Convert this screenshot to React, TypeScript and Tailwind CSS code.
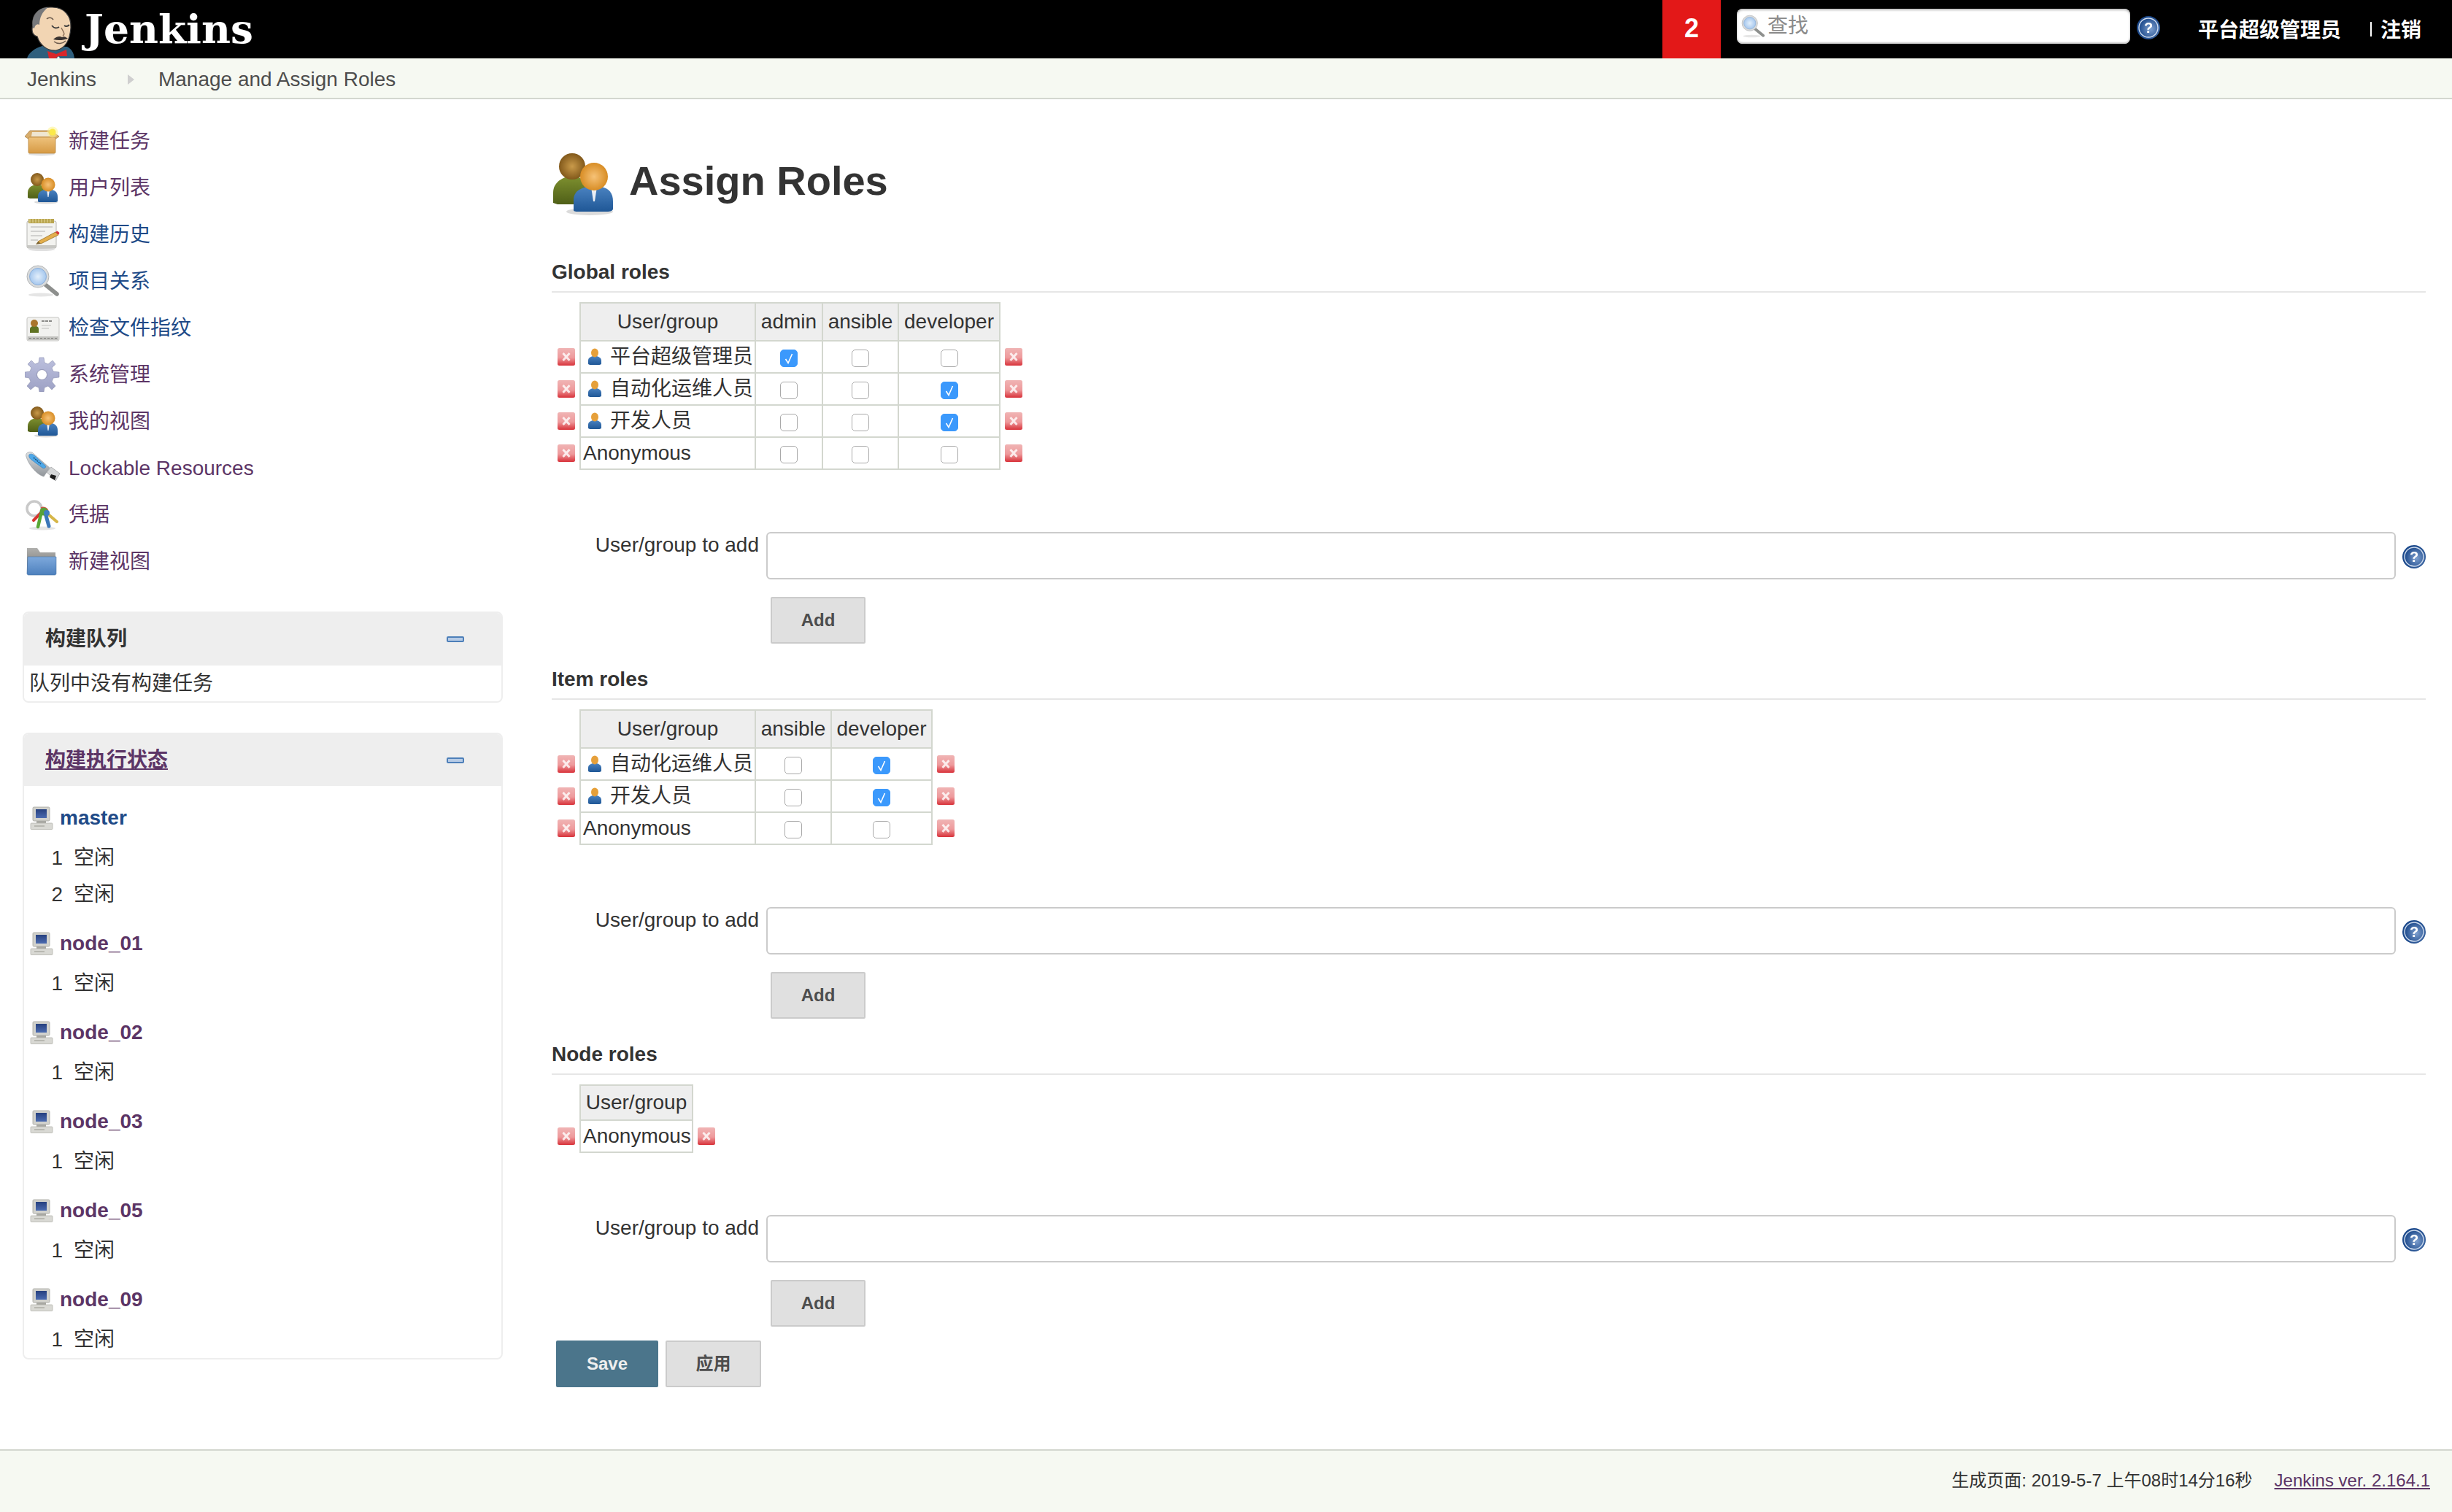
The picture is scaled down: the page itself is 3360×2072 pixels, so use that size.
const FONT = "[font-family:'Liberation_Sans','Noto_Sans_CJK_SC',sans-serif]";
const SOFT = "shrink-0 blur-[0.5px]";

const JenkinsMascot = () => (
  <svg width="80" height="80" viewBox="0 0 80 80" className={SOFT}>
    <path d="M7 80 C9 72 18 66 28 63 L62 64 C68 67 71 72 72 80 Z" fill="#2f5f7d" />
    <path d="M15 34 C13 17 27 9 42 10 C58 10 68 22 67 38 C66 54 60 66 47 69 C33 70 24 60 21 50 C16 49 12 44 15 34 Z" fill="#f2d5b3" stroke="#3a3a3a" strokeWidth="1.2" />
    <path d="M15 38 C12 20 24 10 36 10 C28 16 24 24 24 34 C21 32 18 34 17 39 Z" fill="#77787a" />
    <path d="M34 26 C37 23 41 24 43 27" fill="none" stroke="#6b5a4c" strokeWidth="1.6" />
    <path d="M41 35 C44 39 48 39 51 37 M58 35 C61 37 63 36 65 34" fill="none" stroke="#3a3a3a" strokeWidth="1.8" />
    <path d="M54 38 C57 44 60 47 56 49" fill="none" stroke="#8b6f58" strokeWidth="1.4" />
    <path d="M43 54 C47 50 52 49 55 51 C58 49 61 51 63 53 C57 55 50 56 43 54 Z" fill="#3a3330" />
    <path d="M44 57 C49 61 56 60 60 56" fill="none" stroke="#6b5a4c" strokeWidth="1.4" />
    <path d="M35 70 L47 74 L61 68 L62 77 L50 77 L46 80 L37 80 Z" fill="#d9262b" />
    <circle cx="50" cy="79" r="1.6" fill="#eee" />
  </svg>
);

const Grad = ({ id, top, bottom }: { id: string; top: string; bottom: string }) => (
  <linearGradient id={id} x1="0" y1="0" x2="0" y2="1">
    <stop offset="0" stopColor={top} />
    <stop offset="1" stopColor={bottom} />
  </linearGradient>
);

const PeopleIcon = ({ size = 48 }: { size?: number }) => (
  <svg width={size} height={size} viewBox="0 0 48 48" className={SOFT}>
    <defs>
      <Grad id="ppl-olive" top="#7d8f2f" bottom="#4f5f17" />
      <Grad id="ppl-blue" top="#4a82c0" bottom="#1f5796" />
      <radialGradient id="ppl-back">
        <stop offset="0" stopColor="#c99a4a" />
        <stop offset="1" stopColor="#82591b" />
      </radialGradient>
      <radialGradient id="ppl-front">
        <stop offset="0" stopColor="#f6c277" />
        <stop offset="1" stopColor="#d88d25" />
      </radialGradient>
    </defs>
    <ellipse cx="29" cy="44" rx="16" ry="2.5" fill="#000" opacity=".14" />
    <path d="M4 38 V31 C4 24 10 21 14 20 H20 C25 21 28 26 28 36 L20 39 H7 Z" fill="url(#ppl-olive)" />
    <circle cx="17" cy="13" r="9" fill="url(#ppl-back)" />
    <path d="M18 43 V36 C18 30 23 28 27 27 H37 C42 28 45 31 45 37 V42 C45 44 42 44 40 44 H22 C20 44 18 44 18 43 Z" fill="url(#ppl-blue)" />
    <path d="M30 27 H34 L32.5 37 H31.5 Z" fill="#e9eef5" />
    <circle cx="32" cy="20" r="9.5" fill="url(#ppl-front)" />
  </svg>
);

const PackageIcon = () => (
  <svg width="48" height="48" viewBox="0 0 48 48" className={SOFT}>
    <defs>
      <Grad id="pkg-body" top="#eec27c" bottom="#d69a44" />
    </defs>
    <ellipse cx="23" cy="42" rx="18" ry="2.5" fill="#000" opacity=".12" />
    <path d="M0 18 L7 10 H36 L47 18 L41 22 H6 Z" fill="#d8ad6c" stroke="#a9824a" strokeWidth=".8" />
    <path d="M10 12 H32 L35 18 H9 Z" fill="#efe6d2" />
    <rect x="5" y="19" width="37" height="22" rx="1.5" fill="url(#pkg-body)" stroke="#b8863e" strokeWidth=".8" />
    <circle cx="38" cy="12" r="7.5" fill="#fdf28a" opacity=".55" />
    <circle cx="38" cy="12" r="4.5" fill="#fbe94a" />
  </svg>
);

const NotepadIcon = () => (
  <svg width="48" height="48" viewBox="0 0 48 48" className={SOFT}>
    <ellipse cx="23" cy="45" rx="18" ry="2" fill="#000" opacity=".12" />
    <rect x="3" y="6" width="40" height="37" rx="2" fill="#f3f3f0" stroke="#b6b6b2" strokeWidth="1" />
    <rect x="3" y="39" width="40" height="4" fill="#c8c8c4" />
    <rect x="5" y="3" width="35" height="6" fill="#b9a54f" />
    <path d="M7 3 V8 M11 3 V8 M15 3 V8 M19 3 V8 M23 3 V8 M27 3 V8 M31 3 V8 M35 3 V8" stroke="#e7dca0" strokeWidth="1" />
    <path d="M8 14 H38 M8 20 H28 M8 26 H24 M8 32 H18" stroke="#c6c6c3" strokeWidth="1.6" />
    <path d="M18 34 L42 21 L46 25 L22 37 Z" fill="#e3ae4c" stroke="#9c7426" strokeWidth=".8" />
    <path d="M18 34 L22 37 L15 38 Z" fill="#7c6330" />
    <path d="M42 21 L46 25 L47.5 22 L44.5 19.5 Z" fill="#d7353a" />
  </svg>
);

const SearchIcon = ({ size = 48 }: { size?: number }) => (
  <svg width={size} height={size} viewBox="0 0 48 48" className={SOFT}>
    <defs>
      <radialGradient id="srch-glass">
        <stop offset="0" stopColor="#e3effb" />
        <stop offset="1" stopColor="#a5c7ee" />
      </radialGradient>
    </defs>
    <ellipse cx="22" cy="43" rx="17" ry="2.5" fill="#000" opacity=".1" />
    <path d="M28 29 L44 42" stroke="#8d8f8d" strokeWidth="5.5" strokeLinecap="round" />
    <circle cx="18" cy="18" r="15" fill="#d9dbdc" stroke="#b5b7b8" strokeWidth="1" />
    <circle cx="18" cy="18" r="11.5" fill="url(#srch-glass)" stroke="#8fb0d8" strokeWidth="1" />
  </svg>
);

const CardIcon = () => (
  <svg width="48" height="48" viewBox="0 0 48 48" className={SOFT}>
    <rect x="3" y="10" width="44" height="32" rx="2" fill="#f1f1ef" stroke="#c5c5c2" strokeWidth="1" />
    <rect x="4" y="36" width="42" height="5" fill="#c2c2bf" />
    <path d="M6 38.5 H44" stroke="#7c7c7a" strokeWidth="1" strokeDasharray="3 2" />
    <path d="M7 31 V26 C7 23 10 22 11 22 H15 C17 22 19 23 19 26 V31 Z" fill="#5f7222" />
    <circle cx="13" cy="18" r="5" fill="#a9742c" />
    <path d="M23 15 H38" stroke="#8a8a88" strokeWidth="2" strokeDasharray="4 1" />
    <path d="M23 21 H36 M23 25 H33" stroke="#d0d0ce" strokeWidth="1.5" />
  </svg>
);

const GearIcon = () => (
  <svg width="48" height="48" viewBox="0 0 48 48" className={SOFT}>
    <defs>
      <Grad id="gear-fill" top="#bcc0de" bottom="#9da1c4" />
    </defs>
    <path
      d="M20 1 H26 L27 8 L32 10 L38 5 L42 10 L37 15 L39 20 L47 21 V28 L39 29 L37 34 L42 40 L37 45 L32 40 L27 42 L26 48 H20 L19 42 L14 40 L8 45 L3 40 L8 34 L6 29 L0 28 V21 L7 20 L9 15 L4 10 L9 5 L14 10 L19 8 Z"
      fill="url(#gear-fill)"
      stroke="#8a8eaf"
      strokeWidth=".6"
    />
    <circle cx="23.5" cy="24.5" r="7" fill="#fff" stroke="#7f83a5" strokeWidth=".8" />
  </svg>
);

const UsbIcon = () => (
  <svg width="48" height="48" viewBox="0 0 48 48" className={SOFT}>
    <defs>
      <Grad id="usb-body" top="#dfe2e4" bottom="#8f9499" />
    </defs>
    <path d="M2 9 C0 4 6 1 10 3 L34 24 L26 36 C18 34 6 22 2 9 Z" fill="url(#usb-body)" stroke="#9b9fa3" strokeWidth=".7" />
    <path d="M6 6 C9 4 12 6 14 8 L28 21 C30 23 27 26 24 24 L9 13 C6 11 5 8 6 6 Z" fill="#4ea8e8" stroke="#2d78b8" strokeWidth=".6" />
    <path d="M12 10 L22 19" stroke="#164f80" strokeWidth="1.5" strokeDasharray="2 1" />
    <path d="M30 30 L36 23 L48 32 L42 42 Z" fill="#d5d7d8" stroke="#8a8c8e" strokeWidth=".6" />
    <path d="M36 33 L43 35 L41 41 L34 37 Z" fill="#1c1c1c" />
  </svg>
);

const KeysIcon = () => (
  <svg width="48" height="48" viewBox="0 0 48 48" className={SOFT}>
    <ellipse cx="24" cy="43" rx="18" ry="2.5" fill="#000" opacity=".1" />
    <circle cx="13" cy="16" r="10" fill="none" stroke="#c9c9c9" strokeWidth="3.5" />
    <path d="M30 22 L44 34" stroke="#d6b648" strokeWidth="4" strokeLinecap="round" />
    <path d="M22 14 C28 12 34 16 32 22 L24 24 Z" fill="#d84b3f" />
    <path d="M24 20 L12 32" stroke="#d8342f" strokeWidth="4" strokeLinecap="round" />
    <path d="M22 24 L18 41" stroke="#5aa834" strokeWidth="4.5" strokeLinecap="round" />
    <path d="M28 22 L33 40" stroke="#3a76b8" strokeWidth="5" strokeLinecap="round" />
    <circle cx="26" cy="20" r="5.5" fill="#58a13a" />
    <circle cx="30" cy="22" r="4" fill="#3f7dc0" />
  </svg>
);

const FolderIcon = () => (
  <svg width="48" height="48" viewBox="0 0 48 48" className={SOFT}>
    <defs>
      <Grad id="fld-tab" top="#b0b0ae" bottom="#6e6e6c" />
      <Grad id="fld-front" top="#7ea9dc" bottom="#4d80bd" />
    </defs>
    <path d="M3 6 H17 L21 12 H42 V40 H3 Z" fill="url(#fld-tab)" />
    <path d="M4 18 H43 V41 C43 42 42 43 41 43 H5 C4 43 3 42 3 41 Z" fill="url(#fld-front)" stroke="#4a76aa" strokeWidth=".6" />
  </svg>
);

const ComputerIcon = () => (
  <svg width="32" height="32" viewBox="0 0 32 32" className={SOFT}>
    <defs>
      <Grad id="cmp-screen" top="#26407f" bottom="#4b6bb0" />
    </defs>
    <rect x="4" y="1" width="23" height="19" rx="1.5" fill="#d2d2cd" stroke="#a3a39d" strokeWidth=".8" />
    <rect x="8" y="4" width="15" height="12" fill="url(#cmp-screen)" />
    <rect x="9" y="20" width="13" height="3" fill="#a8a8a3" />
    <rect x="1" y="23" width="30" height="8.5" rx="1" fill="#d9d9d4" stroke="#b5b5af" strokeWidth=".8" />
    <path d="M6 27 H20" stroke="#a9a9a3" strokeWidth="1.4" />
  </svg>
);

const HelpIcon = () => (
  <svg width="32" height="32" viewBox="0 0 32 32" className={SOFT}>
    <defs>
      <radialGradient id="hlp-fill" cx=".6" cy=".55">
        <stop offset="0" stopColor="#7fa0cf" />
        <stop offset="1" stopColor="#1d4a8c" />
      </radialGradient>
    </defs>
    <circle cx="16" cy="16" r="16" fill="url(#hlp-fill)" />
    <circle cx="16" cy="16" r="13" fill="none" stroke="#cfdcee" strokeWidth="1.4" />
    <text x="16" y="23" textAnchor="middle" fontSize="20" fontWeight="700" fontFamily="Liberation Sans" fill="#fff">
      ?
    </text>
  </svg>
);

const RemoveIcon = () => (
  <svg width="24" height="24" viewBox="0 0 24 24" className="block blur-[0.5px]">
    <defs>
      <linearGradient id="rm-fill" x1="0" y1="0" x2="0" y2="1">
        <stop offset="0" stopColor="#f0b4b4" />
        <stop offset=".55" stopColor="#ee9a9c" />
        <stop offset="1" stopColor="#d8323a" />
      </linearGradient>
    </defs>
    <rect x="0" y="0" width="24" height="24" rx="2.5" fill="url(#rm-fill)" />
    <path d="M7.5 7 L16.5 17 M16.5 7 L7.5 17" stroke="#fff" strokeOpacity=".8" strokeWidth="3" />
  </svg>
);

const PersonIcon = () => (
  <svg width="20" height="24" viewBox="0 0 20 24" className={SOFT}>
    <defs>
      <Grad id="usr-body" top="#4a82c0" bottom="#1f5796" />
    </defs>
    <path d="M1 21 V17 C1 13 5 12 7 11 H13 C15 12 19 13 19 17 V21 C19 23 16 23 14 23 H6 C4 23 1 23 1 21 Z" fill="url(#usr-body)" />
    <ellipse cx="10" cy="6.5" rx="5" ry="6" fill="#e6a03a" />
  </svg>
);

const CollapseIcon = () => (
  <span className="block h-2 w-6 shrink-0 rounded-[2px] border-2 border-[#4d7fb9] bg-[#b6cbe6]" />
);

const Check = ({ checked }: { checked?: boolean }) => (
  <span className="relative inline-block h-6 w-6 align-middle">
    <input
      type="checkbox"
      defaultChecked={checked}
      className="block h-6 w-6 appearance-none rounded-[5px] border border-[#a9a9a9] bg-white checked:border-[#3b99fc] checked:bg-[#3b99fc]"
    />
    {checked && (
      <svg viewBox="0 0 24 24" className="pointer-events-none absolute inset-0 h-6 w-6">
        <path d="M7.5 13 L11 18.5 L16.5 6" fill="none" stroke="#fff" strokeWidth="1.6" />
      </svg>
    )}
  </span>
);

type Row = { name: string; person?: boolean; checks: boolean[] };

const CELL = "border-2 border-[#d3d7cf]";

const RolesTable = ({ roles, rows, widths, headHeight }: { roles: string[]; rows: Row[]; widths: number[]; headHeight: number }) => (
  <table className="border-collapse text-[28px] leading-[34px] text-[#333]">
    <thead>
      <tr style={{ height: headHeight }}>
        <th className="w-[39px] min-w-[39px] p-0" />
        <th style={{ width: widths[0], minWidth: widths[0] }} className={`${CELL} bg-[#eee] p-0 text-center font-normal`}>
          User/group
        </th>
        {roles.map((role, i) => (
          <th key={role} style={{ width: widths[i + 1], minWidth: widths[i + 1] }} className={`${CELL} bg-[#eee] p-0 text-center font-normal`}>
            {role}
          </th>
        ))}
        <th className="p-0" />
      </tr>
    </thead>
    <tbody>
      {rows.map((row) => (
        <tr key={row.name}>
          <td className="p-0 pl-[8px]">
            <RemoveIcon />
          </td>
          <td className={`${CELL} h-[44px] p-0 pl-[3px]`}>
            {row.person ? (
              <span className="flex items-center whitespace-nowrap pl-[6px]">
                <PersonIcon />
                <span className="ml-[11px]">{row.name}</span>
              </span>
            ) : (
              row.name
            )}
          </td>
          {row.checks.map((checked, i) => (
            <td key={i} className={`${CELL} p-0 text-center`}>
              <Check checked={checked} />
            </td>
          ))}
          <td className="p-0 pl-[6px]">
            <RemoveIcon />
          </td>
        </tr>
      ))}
    </tbody>
  </table>
);

const GreyButton = ({ label, className }: { label: string; className: string }) => (
  <button type="button" className={`h-16 rounded-[2px] border-2 border-[#cbcbcb] bg-[#e0e0e0] text-[24px] font-bold text-[#4d4d4d] ${className}`}>
    {label}
  </button>
);

const RoleSection = ({
  title,
  roles,
  rows,
  widths,
  headHeight = 52,
  className,
}: {
  title: string;
  roles: string[];
  rows: Row[];
  widths: number[];
  headHeight?: number;
  className: string;
}) => (
  <section className={className}>
    <h2 className="border-b-2 border-[#e6e6e6] pb-[6px] pt-[2px] text-[28px] font-bold leading-[40px] text-[#333]">{title}</h2>
    <div className="mt-[13px]">
      <RolesTable roles={roles} rows={rows} widths={widths} headHeight={headHeight} />
    </div>
    <div className="mt-[85px] flex">
      <label className="w-[284px] text-right text-[28px] leading-[36px] text-[#333]">User/group to add</label>
      <input type="text" className="ml-[10px] h-[65px] flex-1 rounded-[6px] border-2 border-[#cbcbcb] bg-white" />
      <span className="ml-[9px] self-center pt-[2px]">
        <HelpIcon />
      </span>
    </div>
    <GreyButton label="Add" className="ml-[300px] mt-[24px] block w-[130px]" />
  </section>
);

const navItems = [
  { label: "新建任务", icon: <PackageIcon />, color: "text-[#5c3566]" },
  { label: "用户列表", icon: <PeopleIcon />, color: "text-[#5c3566]" },
  { label: "构建历史", icon: <NotepadIcon />, color: "text-[#204a87]" },
  { label: "项目关系", icon: <SearchIcon />, color: "text-[#204a87]" },
  { label: "检查文件指纹", icon: <CardIcon />, color: "text-[#204a87]" },
  { label: "系统管理", icon: <GearIcon />, color: "text-[#5c3566]" },
  { label: "我的视图", icon: <PeopleIcon />, color: "text-[#5c3566]" },
  { label: "Lockable Resources", icon: <UsbIcon />, color: "text-[#5c3566]" },
  { label: "凭据", icon: <KeysIcon />, color: "text-[#5c3566]" },
  { label: "新建视图", icon: <FolderIcon />, color: "text-[#5c3566]" },
];

const nodes = [
  { name: "master", idle: [1, 2], color: "text-[#204a87]" },
  { name: "node_01", idle: [1], color: "text-[#5c3566]" },
  { name: "node_02", idle: [1], color: "text-[#5c3566]" },
  { name: "node_03", idle: [1], color: "text-[#5c3566]" },
  { name: "node_05", idle: [1], color: "text-[#5c3566]" },
  { name: "node_09", idle: [1], color: "text-[#5c3566]" },
];

const Sidebar = () => (
  <aside className="w-[756px] shrink-0 pl-[31px] pt-[26px]">
    <nav>
      {navItems.map((item) => (
        <a key={item.label} className={`flex h-16 items-center pl-[3px] text-[28px] ${item.color}`}>
          <span className="mb-[3px] flex">{item.icon}</span>
          <span className="ml-[12px]">{item.label}</span>
        </a>
      ))}
    </nav>
    <div className="mt-[36px] w-[658px] overflow-hidden rounded-[8px] border-2 border-[#eee]">
      <div className="flex h-[72px] items-center justify-between bg-[#eee] pl-[29px] pr-[51px]">
        <span className="text-[28px] font-bold text-[#333]">构建队列</span>
        <CollapseIcon />
      </div>
      <div className="flex h-[49px] items-center pl-[7px] text-[28px] text-[#333]">队列中没有构建任务</div>
    </div>
    <div className="mt-[41px] w-[658px] overflow-hidden rounded-[8px] border-2 border-[#eee]">
      <div className="flex h-[71px] items-center justify-between bg-[#eee] pl-[29px] pr-[51px]">
        <a className="text-[28px] font-bold text-[#5c3566] underline">构建执行状态</a>
        <CollapseIcon />
      </div>
      <div className="pt-[17px]">
        {nodes.map((node) => (
          <div key={node.name} className="mb-[15px] last:mb-0">
            <div className="flex h-[54px] items-center pl-[8px]">
              <ComputerIcon />
              <a className={`ml-[9px] text-[28px] font-bold ${node.color}`}>{node.name}</a>
            </div>
            <div className="pt-[3px]">
              {node.idle.map((n) => (
                <div key={n} className="flex h-[50px] items-center text-[28px] text-[#333]">
                  <span className="w-[66px] pr-[13px] text-right">{n}</span>
                  <span className="ml-[2px]">空闲</span>
                </div>
              ))}
            </div>
          </div>
        ))}
      </div>
    </div>
  </aside>
);

const globalRows: Row[] = [
  { name: "平台超级管理员", person: true, checks: [true, false, false] },
  { name: "自动化运维人员", person: true, checks: [false, false, true] },
  { name: "开发人员", person: true, checks: [false, false, true] },
  { name: "Anonymous", checks: [false, false, false] },
];

const itemRows: Row[] = [
  { name: "自动化运维人员", person: true, checks: [false, true] },
  { name: "开发人员", person: true, checks: [false, true] },
  { name: "Anonymous", checks: [false, false] },
];

export default function App() {
  return (
    <div className={`flex min-h-screen flex-col bg-white ${FONT}`}>
      <header className="flex h-20 shrink-0 items-stretch overflow-hidden bg-black pl-[30px]">
        <JenkinsMascot />
        <span className="ml-[6px] self-center pb-[2px] text-[55px] font-bold leading-none text-white [font-family:'DejaVu_Serif',serif]">Jenkins</span>
        <div className="flex-1" />
        <div className="flex w-20 items-center justify-center bg-[#e31818] pb-[2px] text-[36px] font-bold text-white">2</div>
        <div className="ml-[22px] mt-[12px] flex h-12 w-[539px] items-center rounded-[8px] bg-white pl-[5px] text-[28px] text-[#8a8a8a] shadow-[inset_0_2px_3px_#bbb,inset_0_-2px_2px_#ccc]">
          <SearchIcon size={34} />
          <span className="ml-[3px]">查找</span>
        </div>
        <span className="ml-[9px] mt-[22px]">
          <HelpIcon />
        </span>
        <a className="ml-[52px] self-center pt-[4px] text-[28px] font-bold text-white">平台超级管理员</a>
        <span className="ml-[40px] h-[20px] w-[2px] self-center bg-white" />
        <a className="ml-[12px] mr-[42px] self-center pt-[4px] text-[28px] font-bold text-white">注销</a>
      </header>
      <div className="flex h-[56px] shrink-0 items-center border-b-2 border-[#d3d7cf] bg-[#f6f9f2] pl-[37px] pt-[4px] text-[28px] text-[#4d4d4d]">
        <a>Jenkins</a>
        <span className="ml-[43px] h-0 w-0 border-y-[7px] border-l-[9px] border-y-transparent border-l-[#cfcfcf]" />
        <a className="ml-[33px]">Manage and Assign Roles</a>
      </div>
      <div className="flex flex-1">
        <Sidebar />
        <main className="min-w-0 flex-1 pr-[36px] pt-[68px]">
          <div className="flex h-[96px] items-center">
            <div className="-ml-[6px] mb-[4px]">
              <PeopleIcon size={96} />
            </div>
            <h1 className="ml-[16px] pb-[8px] text-[56px] font-bold text-[#333]">Assign Roles</h1>
          </div>
          <RoleSection title="Global roles" roles={["admin", "ansible", "developer"]} rows={globalRows} widths={[240, 92, 104, 139]} className="mt-[51px]" />
          <RoleSection title="Item roles" roles={["ansible", "developer"]} rows={itemRows} widths={[240, 104, 138]} className="mt-[27px]" />
          <RoleSection title="Node roles" roles={[]} rows={[{ name: "Anonymous", checks: [] }]} widths={[154]} headHeight={48} className="mt-[27px]" />
          <div className="ml-[6px] mt-[19px] flex gap-[10px]">
            <button type="button" className="h-16 w-[140px] rounded-[2px] border-2 border-[#4b758b] bg-[#4b758b] text-[24px] font-bold text-[#eee]">
              Save
            </button>
            <GreyButton label="应用" className="w-[131px]" />
          </div>
        </main>
      </div>
      <footer className="flex h-[86px] shrink-0 items-center justify-end border-t-2 border-[#d3d7cf] bg-[#f6f9f2] pb-[2px] pr-[30px] text-[24px] text-[#333]">
        <span>生成页面: 2019-5-7 上午08时14分16秒</span>
        <a className="ml-[30px] text-[#5c3566] underline">Jenkins ver. 2.164.1</a>
      </footer>
    </div>
  );
}
